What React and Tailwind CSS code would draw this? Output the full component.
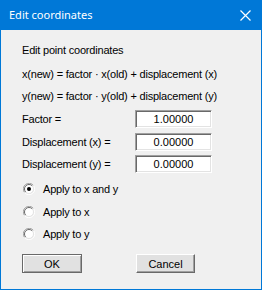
import React from "react";

const dlgFont = { fontFamily: '"Liberation Sans", Arial, sans-serif' };

function Radio({ checked }) {
  return (
    <svg width="12" height="12" viewBox="0 0 12 12" className="shrink-0">
      <path d="M10.5 2.5 A5.5 5.5 0 0 0 1.5 9.5" fill="none" stroke="#a0a0a0" strokeWidth="1" />
      <path d="M1.5 9.5 A5.5 5.5 0 0 0 10.5 2.5" fill="none" stroke="#ffffff" strokeWidth="1" />
      <circle cx="6" cy="6" r="4.5" fill="#ffffff" />
      <path d="M9.2 2.8 A4.5 4.5 0 0 0 2.8 9.2" fill="none" stroke="#696969" strokeWidth="1" />
      <path d="M2.8 9.2 A4.5 4.5 0 0 0 9.2 2.8" fill="none" stroke="#e3e3e3" strokeWidth="1" />
      {checked && <circle cx="6" cy="6" r="2" fill="#000000" />}
    </svg>
  );
}

function Field({ label, value, mt }) {
  return (
    <div className={`flex items-center h-[18px] ${mt}`}>
      <span className="w-[113px] text-[11px] tracking-[-0.2px] leading-[18px]">{label}</span>
      <div className="w-[77px] h-[18px] bg-white border border-t-[#a0a0a0] border-l-[#a0a0a0] border-r-white border-b-white shadow-[inset_1px_1px_0_#696969,inset_-1px_-1px_0_#e3e3e3] flex items-center justify-center text-[11px] leading-[16px]">
        {value}
      </div>
    </div>
  );
}

function Option({ label, checked, mt }) {
  return (
    <div className={`flex items-center h-[16px] ${mt}`}>
      <div className="w-[21px] pl-[1px]">
        <Radio checked={checked} />
      </div>
      <span className="text-[11px] tracking-[-0.2px] leading-[16px]">{label}</span>
    </div>
  );
}

export default function App() {
  return (
    <div className="w-[262px] h-[290px] bg-[#0078d7] flex flex-col px-[1px] pb-[1px]">
      {/* Title bar */}
      <div className="h-[30px] flex items-center justify-between pl-[8px] pr-[10px] text-white">
        <span className="text-[11px]" style={{ fontFamily: '"Noto Sans", sans-serif' }}>
          Edit coordinates
        </span>
        <svg width="11" height="11" viewBox="0 0 11 11">
          <path d="M0.5 0.5 L10.5 10.5 M10.5 0.5 L0.5 10.5" stroke="#ffffff" strokeWidth="1.2" />
        </svg>
      </div>

      {/* Body */}
      <div className="flex-1 bg-[#f0f0f0] flex flex-col pl-[21px] text-black" style={dlgFont}>
        <div className="mt-[12px] h-[16px] text-[11px] tracking-[-0.2px] leading-[16px]">Edit point coordinates</div>
        <div className="mt-[8px] h-[16px] text-[11px] tracking-[-0.2px] leading-[16px]">
          x(new) = factor · x(old) + displacement (x)
        </div>
        <div className="mt-[6px] h-[16px] text-[11px] tracking-[-0.2px] leading-[16px]">
          y(new) = factor · y(old) + displacement (y)
        </div>

        <Field label="Factor =" value="1.00000" mt="mt-[6px]" />
        <Field label="Displacement (x) =" value="0.00000" mt="mt-[5px]" />
        <Field label="Displacement (y) =" value="0.00000" mt="mt-[4px]" />

        <Option label="Apply to x and y" checked mt="mt-[8px]" />
        <Option label="Apply to x" mt="mt-[7px]" />
        <Option label="Apply to y" mt="mt-[6px]" />

        <div className="flex mt-[12px]">
          <button className="w-[60px] h-[19px] bg-[#e1e1e1] border border-[#696969] shadow-[inset_1px_1px_0_#ffffff,inset_-1px_-1px_0_#a0a0a0] text-[11px] leading-[16px]">
            OK
          </button>
          <button className="ml-[54px] w-[59px] h-[19px] bg-[#e1e1e1] border border-t-white border-l-white border-r-[#696969] border-b-[#696969] shadow-[inset_-1px_-1px_0_#a0a0a0] text-[11px] leading-[16px]">
            Cancel
          </button>
        </div>
      </div>
    </div>
  );
}
